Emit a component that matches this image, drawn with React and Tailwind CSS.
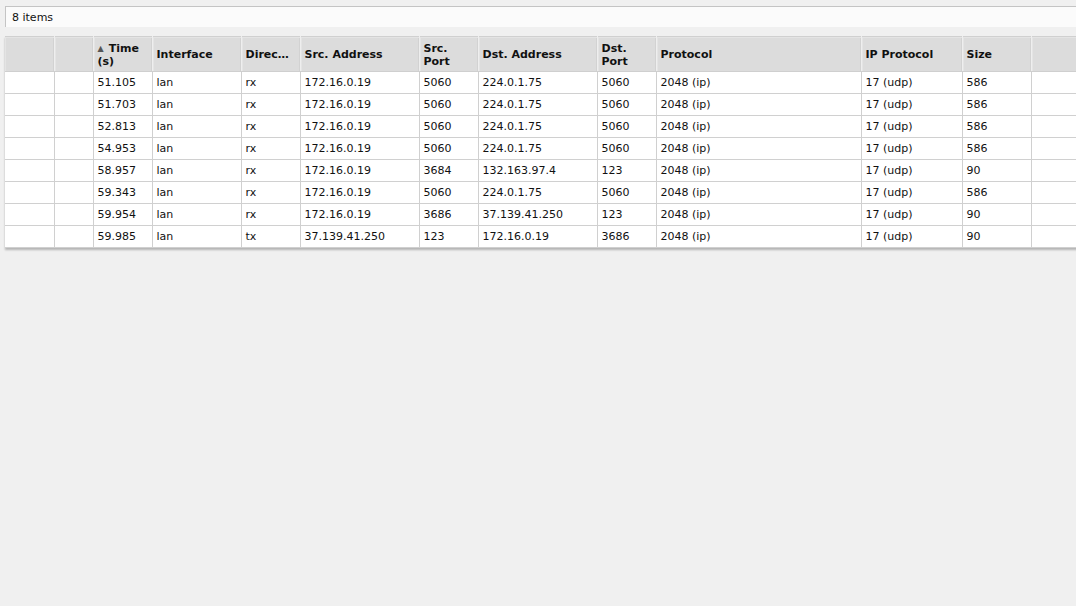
import React from "react";

const rows = [
  ["51.105", "lan", "rx", "172.16.0.19", "5060", "224.0.1.75", "5060", "2048 (ip)", "17 (udp)", "586"],
  ["51.703", "lan", "rx", "172.16.0.19", "5060", "224.0.1.75", "5060", "2048 (ip)", "17 (udp)", "586"],
  ["52.813", "lan", "rx", "172.16.0.19", "5060", "224.0.1.75", "5060", "2048 (ip)", "17 (udp)", "586"],
  ["54.953", "lan", "rx", "172.16.0.19", "5060", "224.0.1.75", "5060", "2048 (ip)", "17 (udp)", "586"],
  ["58.957", "lan", "rx", "172.16.0.19", "3684", "132.163.97.4", "123", "2048 (ip)", "17 (udp)", "90"],
  ["59.343", "lan", "rx", "172.16.0.19", "5060", "224.0.1.75", "5060", "2048 (ip)", "17 (udp)", "586"],
  ["59.954", "lan", "rx", "172.16.0.19", "3686", "37.139.41.250", "123", "2048 (ip)", "17 (udp)", "90"],
  ["59.985", "lan", "tx", "37.139.41.250", "123", "172.16.0.19", "3686", "2048 (ip)", "17 (udp)", "90"],
];

const headers = [
  { label: "", w: "w-[49px]" },
  { label: "", w: "w-[39px]" },
  { label: "Time (s)", w: "w-[59px]", sort: true },
  { label: "Interface", w: "w-[89px]" },
  { label: "Direction", w: "w-[59px]" },
  { label: "Src. Address", w: "w-[119px]" },
  { label: "Src. Port", w: "w-[59px]" },
  { label: "Dst. Address", w: "w-[119px]" },
  { label: "Dst. Port", w: "w-[59px]" },
  { label: "Protocol", w: "w-[205px]" },
  { label: "IP Protocol", w: "w-[101px]" },
  { label: "Size", w: "w-[69px]" },
  { label: "", w: "w-[80px]" },
];

export default function App() {
  return (
    <div
      className="h-[606px] w-full overflow-hidden bg-[#f0f0f0] text-[11px] text-[#111] pl-[5px] pt-[6px]"
      style={{ fontFamily: "Verdana, 'DejaVu Sans', sans-serif" }}
    >
      <div className="w-[1110px]">
        {/* status bar */}
        <div className="h-[21px] border-t border-l border-[#c4c4c4] bg-[#fbfbfb] pl-[6px] leading-[22px]">
          8 items
        </div>

        {/* packet table */}
        <div className="mt-[9px] shadow-[0_2px_2px_rgba(0,0,0,0.25)]">
          <table className="table-fixed border-collapse w-[1106px]">
            <colgroup>
              {headers.map((h, i) => (
                <col key={i} className={h.w} />
              ))}
            </colgroup>
            <thead>
              <tr className="h-[35px] bg-[#dcdcdc]">
                {headers.map((h, i) => (
                  <th
                    key={i}
                    className="border-t border-b border-r border-t-[#d0d0d0] border-b-[#cfcfcf] border-r-[#eeeeee] shadow-[inset_1px_1px_0_#e4e4e4,inset_-1px_0_0_#d2d2d2] pl-[4px] pr-[4px] pt-[1px] text-left align-middle font-bold leading-[13px] overflow-hidden whitespace-normal"
                  >
                    {h.label === "Direction" ? (
                      <span className="block truncate pr-[4px]">{h.label}</span>
                    ) : h.sort ? (
                      <span>
                        <span className="text-[8px] text-[#555] mr-[5px] align-[1px]">▲</span>
                        Time (s)
                      </span>
                    ) : (
                      h.label
                    )}
                  </th>
                ))}
              </tr>
            </thead>
            <tbody className="bg-white">
              {rows.map((r, ri) => (
                <tr key={ri} className="h-[22px]">
                  <td className="border-r border-b border-[#d0d0d0]" />
                  <td className="border-r border-b border-[#d0d0d0]" />
                  {r.map((c, ci) => (
                    <td
                      key={ci}
                      className="border-r border-b border-[#d0d0d0] px-[4px] pt-[1px] whitespace-nowrap overflow-hidden"
                    >
                      {c}
                    </td>
                  ))}
                  <td className="border-b border-[#d0d0d0]" />
                </tr>
              ))}
            </tbody>
          </table>
        </div>
      </div>
    </div>
  );
}
